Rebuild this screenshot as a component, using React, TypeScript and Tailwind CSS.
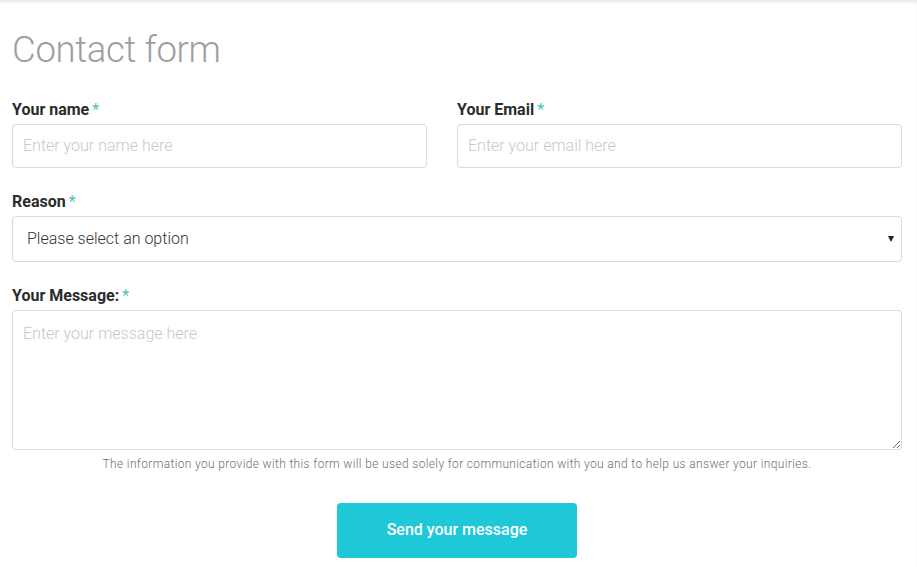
import { useState } from 'react';

const Label = ({ text }: { text: string }) => (
    <label className="block text-[16px] font-bold text-[#2b2b2b] leading-5 mb-[4px]">
        {text}
        <span className="text-[#4fc1b5] font-normal ml-[3px]">*</span>
    </label>
);

export default function App() {
    const [reason, setReason] = useState('');

    return (
        <div className="w-[917px] h-[567px] bg-white overflow-hidden font-['Roboto',sans-serif] border-t-2 border-[#ececec] shadow-[inset_0_1px_2px_rgba(0,0,0,0.06)]">
            <div className="pl-[12px] pr-[15px]">
                <h1 className="text-[36.5px] font-light text-[#9e9e9e] leading-none pt-[30px] tracking-[-0.3px]">Contact form</h1>

                <div className="grid grid-cols-[415px_445px] gap-x-[30px] mt-[31px]">
                    <div>
                        <Label text="Your name" />
                        <input
                            placeholder="Enter your name here"
                            className="w-full h-[44px] border border-[#d9d9d9] rounded-[4px] px-[10px] text-[16px] font-light text-[#333] placeholder:text-[#c8c8c8] outline-none"
                        />
                    </div>
                    <div>
                        <Label text="Your Email" />
                        <input
                            placeholder="Enter your email here"
                            className="w-full h-[44px] border border-[#d9d9d9] rounded-[4px] px-[10px] text-[16px] font-light text-[#333] placeholder:text-[#c8c8c8] outline-none"
                        />
                    </div>
                </div>

                <div className="mt-[24px]">
                    <Label text="Reason" />
                    <div className="relative w-[890px]">
                        <select
                            value={reason}
                            onChange={(e) => setReason(e.target.value)}
                            className="appearance-none w-full h-[46px] border border-[#d9d9d9] rounded-[4px] pl-[14px] pr-8 text-[16px] font-light text-[#333] bg-white outline-none"
                        >
                            <option value="">Please select an option</option>
                            <option value="support">Support</option>
                            <option value="sales">Sales</option>
                        </select>
                        <span className="absolute right-[8px] top-[20px] w-0 h-0 border-l-[3.5px] border-r-[3.5px] border-t-[6px] border-l-transparent border-r-transparent border-t-[#222] pointer-events-none" />
                    </div>
                </div>

                <div className="mt-[24px]">
                    <Label text="Your Message:" />
                    <textarea
                        placeholder="Enter your message here"
                        className="block w-[890px] h-[140px] border border-[#d9d9d9] rounded-[4px] px-[10px] pt-[11px] text-[16px] font-light text-[#333] placeholder:text-[#c8c8c8] outline-none resize-y"
                    />
                </div>

                <p className="text-center text-[12px] font-light text-[#707070] mt-[6px] w-[890px] leading-4 tracking-[0.35px]">
                    The information you provide with this form will be used solely for communication with you and to help us answer your inquiries.
                </p>

                <div className="flex justify-center w-[890px] mt-[31px]">
                    <button className="w-[240px] h-[55px] bg-[#1ec8d8] rounded-[4px] text-white text-[16px] font-medium">
                        Send your message
                    </button>
                </div>
            </div>
        </div>
    );
}
